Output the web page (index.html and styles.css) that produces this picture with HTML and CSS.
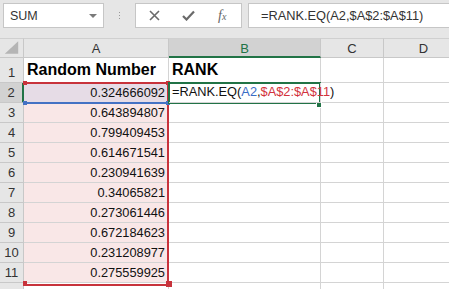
FILE: index.html
```html
<!DOCTYPE html>
<html lang="en">
<head>
    <meta charset="UTF-8">
    <title>RANK.EQ</title>
    <link rel="stylesheet" href="styles.css">
</head>
<body>
    <div class="toolbar">
        <div class="name-box">
            <span>SUM</span>
            <svg class="caret" width="8" height="4" viewBox="0 0 8 4"><polygon points="0,0 8,0 4,4" fill="#7a7a7a"/></svg>
        </div>
        <div class="grip"><i></i><i></i><i></i></div>
        <div class="fx-buttons">
            <svg width="11" height="11" viewBox="0 0 11 11"><path d="M1 1 L10 10 M10 1 L1 10" stroke="#6a6a6a" stroke-width="1.6"/></svg>
            <svg width="13" height="11" viewBox="0 0 13 11"><path d="M1 6 L4.5 9.5 L12 1.5" stroke="#6a6a6a" stroke-width="2.2" fill="none"/></svg>
            <span class="fx">f<small>x</small></span>
        </div>
        <div class="formula-box">=RANK.EQ(A2,$A$2:$A$11)</div>
    </div>

    <div class="sheet">
        <div class="hd corner">
            <svg width="24" height="20" viewBox="0 0 24 20"><polygon points="5,17 19,17 19,4" fill="#b5b5b5"/></svg>
        </div>
        <div class="hd col">A</div>
        <div class="hd col active-col">B</div>
        <div class="hd col">C</div>
        <div class="hd col">D</div>

        <div class="hd row">1</div>
        <div class="cell title">Random Number</div>
        <div class="cell title">RANK</div>
        <div class="cell"></div>
        <div class="cell"></div>

        <div class="hd row active-row">2</div>
        <div class="cell num ref-both">0.324666092</div>
        <div class="cell edit">=RANK.EQ(<span class="blue">A2</span>,<span class="red">$A$2:$A$11</span>)</div>
        <div class="cell"></div>
        <div class="cell"></div>

        <div class="hd row">3</div>
        <div class="cell num ref">0.643894807</div>
        <div class="cell"></div><div class="cell"></div><div class="cell"></div>

        <div class="hd row">4</div>
        <div class="cell num ref">0.799409453</div>
        <div class="cell"></div><div class="cell"></div><div class="cell"></div>

        <div class="hd row">5</div>
        <div class="cell num ref">0.614671541</div>
        <div class="cell"></div><div class="cell"></div><div class="cell"></div>

        <div class="hd row">6</div>
        <div class="cell num ref">0.230941639</div>
        <div class="cell"></div><div class="cell"></div><div class="cell"></div>

        <div class="hd row">7</div>
        <div class="cell num ref">0.34065821</div>
        <div class="cell"></div><div class="cell"></div><div class="cell"></div>

        <div class="hd row">8</div>
        <div class="cell num ref">0.273061446</div>
        <div class="cell"></div><div class="cell"></div><div class="cell"></div>

        <div class="hd row">9</div>
        <div class="cell num ref">0.672184623</div>
        <div class="cell"></div><div class="cell"></div><div class="cell"></div>

        <div class="hd row">10</div>
        <div class="cell num ref">0.231208977</div>
        <div class="cell"></div><div class="cell"></div><div class="cell"></div>

        <div class="hd row">11</div>
        <div class="cell num ref">0.275559925</div>
        <div class="cell"></div><div class="cell"></div><div class="cell"></div>

        <div class="hd row"></div>
        <div class="cell"></div><div class="cell"></div><div class="cell"></div><div class="cell"></div>

        <!-- formula reference outlines and the active cell -->
        <div class="range range-red"></div>
        <div class="range range-blue"></div>
        <div class="knob knob-red k-tl"></div>
        <div class="knob knob-red k-tr"></div>
        <div class="knob knob-red k-bl"></div>
        <div class="knob knob-red k-br"></div>
        <div class="knob knob-blue k-btl"></div>
        <div class="knob knob-blue k-btr"></div>
        <div class="selection"></div>
        <div class="fill-handle"></div>
    </div>
</body>
</html>
```

FILE: styles.css
```css
* {
    margin: 0;
    padding: 0;
    box-sizing: border-box;
}

body {
    font-family: "Liberation Sans", Arial, sans-serif;
    background: #e6e6e6;
    width: 449px;
    height: 289px;
    overflow: hidden;
    color: #222;
}

/* formula bar */
.toolbar {
    display: flex;
    align-items: flex-start;
    height: 38px;
    padding: 3px 0 0 3px;
}

.name-box {
    width: 101px;
    height: 25px;
    background: #fff;
    border: 1px solid #c6c6c6;
    display: flex;
    align-items: center;
    justify-content: space-between;
    padding: 0 6px 0 6px;
    font-size: 12.5px;
    color: #333;
}

.caret {
    margin-top: 1px;
}

.grip {
    width: 31px;
    height: 25px;
    display: flex;
    flex-direction: column;
    align-items: center;
    justify-content: center;
    gap: 2px;
}

.grip i {
    width: 1px;
    height: 1px;
    background: #999;
}

.fx-buttons {
    width: 107px;
    height: 25px;
    background: #fff;
    border: 1px solid #c6c6c6;
    display: flex;
    align-items: center;
    padding-left: 13px;
    gap: 22px;
}

.fx {
    font-family: "Liberation Serif", serif;
    font-style: italic;
    font-size: 14px;
    color: #666;
    margin-left: 1px;
}

.fx small {
    font-size: 10px;
}

.formula-box {
    flex: 1;
    height: 25px;
    margin-left: 6px;
    margin-right: -2px;
    background: #fff;
    border: 1px solid #c6c6c6;
    padding-left: 12px;
    font-size: 12.8px;
    color: #333;
    display: flex;
    align-items: center;
}

/* grid */
.sheet {
    position: relative;
    display: grid;
    grid-template-columns: 24px 145px 152px 63px 80px;
    grid-template-rows: 20px 25px repeat(11, 20px);
    background: #fff;
}

.hd {
    background: #e6e6e6;
    border-right: 1px solid #c8c8c8;
    border-bottom: 1px solid #c8c8c8;
    font-size: 13px;
    color: #333;
    display: flex;
    align-items: center;
    justify-content: center;
}

.hd.col {
    border-top: 1px solid #d0d0d0;
    padding-top: 1px;
}

.corner {
    border-top: 1px solid #d0d0d0;
    align-items: flex-end;
}

.hd.row {
    align-items: flex-end;
    padding-bottom: 2px;
}

.active-col {
    background: #d2d2d2;
    color: #217346;
    border-bottom: 2px solid #217346;
}

.active-row {
    background: #d2d2d2;
    border-right: 2px solid #217346;
}

.cell {
    border-right: 1px solid #d4d4d4;
    border-bottom: 1px solid #d4d4d4;
    font-size: 12.8px;
    color: #111;
    display: flex;
    align-items: flex-end;
    padding: 0 3px 2px 3px;
    white-space: nowrap;
}

.title {
    font-size: 16px;
    font-weight: bold;
    color: #000;
    padding-bottom: 3px;
}

.num {
    justify-content: flex-end;
}

.ref {
    background: #f9e7e7;
}

.ref-both {
    background: #e6dce6;
}

.edit {
    overflow: visible;
    position: relative;
    z-index: 5;
    padding-left: 3px;
    padding-bottom: 3px;
}

.blue {
    color: #3a6cc6;
}

.red {
    color: #d2323c;
}

/* overlays */
.range {
    position: absolute;
    left: 23px;
    width: 146px;
    pointer-events: none;
}

.range-blue {
    top: 64px;
    height: 2px;
    background: #4472c4;
}

.range-red {
    top: 44px;
    height: 202px;
    border: 2px solid #c8333c;
    border-bottom: 0;
    border-left-color: transparent;
}

.range-red::after {
    content: "";
    position: absolute;
    left: -2px;
    right: -2px;
    bottom: -2px;
    height: 2px;
    background: #c8333c;
}

.knob {
    position: absolute;
    width: 4px;
    height: 4px;
}

.knob-red {
    background: #c8333c;
}

.knob-blue {
    background: #4472c4;
}

.k-tl { left: 23px; top: 43px; }
.k-tr { left: 166px; top: 43px; }
.k-bl { left: 23px; top: 243px; }
.k-br { left: 166px; top: 243px; width: 6px; height: 6px; }
.k-btl { left: 23px; top: 63px; }
.k-btr { left: 166px; top: 63px; }

.selection {
    position: absolute;
    left: 168px;
    top: 44px;
    width: 153px;
    height: 22px;
    border: 2px solid #217346;
    z-index: 3;
}

.fill-handle {
    position: absolute;
    left: 316px;
    top: 64px;
    width: 6px;
    height: 6px;
    background: #217346;
    border: 1px solid #fff;
    z-index: 4;
}
```
